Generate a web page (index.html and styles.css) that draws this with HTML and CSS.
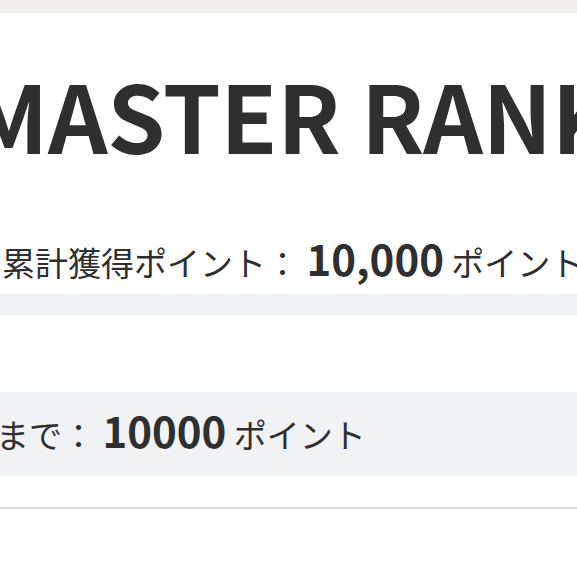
FILE: index.html
```html
<!DOCTYPE html>
<html lang="ja">
<head>
<meta charset="utf-8">
<title>MASTER RANK</title>
<link rel="stylesheet" href="styles.css">
</head>
<body>
<div class="topbar"></div>
<section class="card rank-card">
  <h1 class="rank-title">MASTER RANK</h1>
  <p class="total">累計獲得ポイント： <span class="num">10,000</span> ポイント</p>
</section>
<div class="gap"></div>
<section class="card next-card">
  <div class="next-box">
    <p class="next">まで： <span class="num">10000</span> ポイント</p>
  </div>
  <div class="divider"></div>
</section>
</body>
</html>
```

FILE: styles.css
```css
html, body {
  margin: 0;
  padding: 0;
}
body {
  width: 577px;
  height: 577px;
  overflow: hidden;
  background: #ffffff;
  color: #2f2f2f;
  font-family: "Noto Sans CJK JP", "Noto Sans", sans-serif;
}
.topbar {
  height: 13px;
  background: #f0efee;
}
.card {
  background: #ffffff;
  overflow: hidden;
}
.rank-card {
  padding: 54px 0 15px;
}
.rank-title {
  margin: 0 0 0 -31px;
  font-size: 93px;
  line-height: 1;
  font-weight: 700;
  letter-spacing: -0.4px;
  white-space: nowrap;
}
.total {
  margin: 77px 0 0 2px;
  font-size: 33px;
  line-height: 1;
  white-space: nowrap;
}
.num {
  font-size: 42px;
  line-height: 1;
  font-weight: 700;
}
.gap {
  height: 21px;
  background: #f1f2f3;
}
.next-card {
  padding-top: 77px;
}
.next-box {
  height: 84px;
  box-sizing: border-box;
  padding-top: 17px;
  background: #f1f2f4;
}
.next {
  margin: 0 0 0 -4px;
  font-size: 33px;
  line-height: 1;
  white-space: nowrap;
}
.divider {
  margin-top: 31px;
  height: 2px;
  background: #dcdcdc;
}
```
